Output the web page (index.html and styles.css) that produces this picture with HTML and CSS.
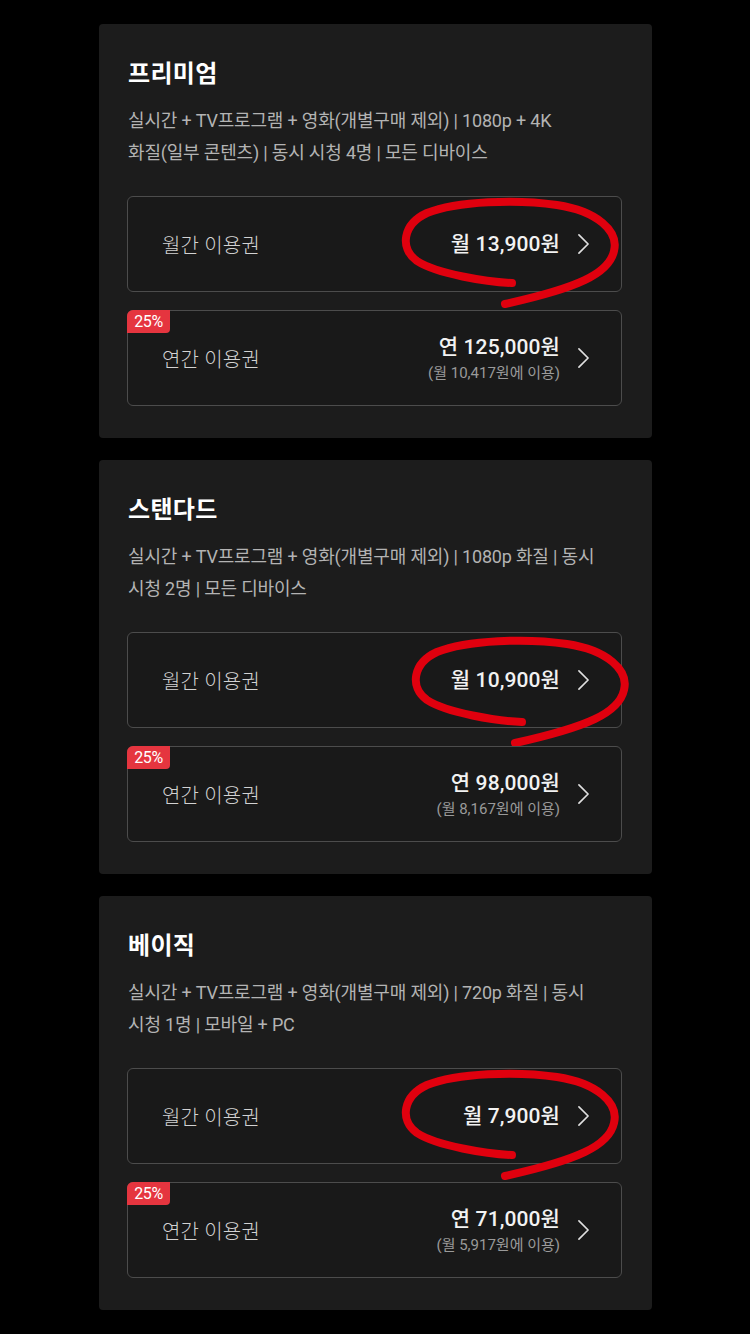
FILE: index.html
```html
<!DOCTYPE html>
<html lang="ko">
<head>
<meta charset="utf-8">
<title>이용권</title>
<link rel="stylesheet" href="styles.css">
</head>
<body>
<main class="plans">

  <section class="card">
    <h2 class="title">프리미엄</h2>
    <p class="desc">실시간 + TV프로그램 + 영화(개별구매 제외) | 1080p + 4K<br>화질(일부 콘텐츠) | 동시 시청 4명 | 모든 디바이스</p>
    <div class="option">
      <span class="label">월간 이용권</span>
      <div class="price-wrap"><span class="price">월 13,900원</span></div>
      <svg class="chev" viewBox="0 0 14 24"><path d="M2 2 L12 12 L2 22"/></svg>
      <svg class="mark" viewBox="0 0 500 120"><path d="M385 87 C360 86 310 78 290 65 C272 52 276 28 300 17 C330 5 390 3 430 9 C470 15 492 35 487 55 C482 78 450 92 378 108"/></svg>
    </div>
    <div class="option">
      <span class="badge">25%</span>
      <span class="label">연간 이용권</span>
      <div class="price-wrap"><span class="price">연 125,000원</span><span class="sub">(월 10,417원에 이용)</span></div>
      <svg class="chev" viewBox="0 0 14 24"><path d="M2 2 L12 12 L2 22"/></svg>
    </div>
  </section>

  <section class="card">
    <h2 class="title">스탠다드</h2>
    <p class="desc">실시간 + TV프로그램 + 영화(개별구매 제외) | 1080p 화질 | 동시<br>시청 2명 | 모든 디바이스</p>
    <div class="option">
      <span class="label">월간 이용권</span>
      <div class="price-wrap"><span class="price">월 10,900원</span></div>
      <svg class="chev" viewBox="0 0 14 24"><path d="M2 2 L12 12 L2 22"/></svg>
      <svg class="mark mark-shift" viewBox="0 0 500 120"><path d="M385 87 C360 86 310 78 290 65 C272 52 276 28 300 17 C330 5 390 3 430 9 C470 15 492 35 487 55 C482 78 450 92 378 108"/></svg>
    </div>
    <div class="option">
      <span class="badge">25%</span>
      <span class="label">연간 이용권</span>
      <div class="price-wrap"><span class="price">연 98,000원</span><span class="sub">(월 8,167원에 이용)</span></div>
      <svg class="chev" viewBox="0 0 14 24"><path d="M2 2 L12 12 L2 22"/></svg>
    </div>
  </section>

  <section class="card">
    <h2 class="title">베이직</h2>
    <p class="desc">실시간 + TV프로그램 + 영화(개별구매 제외) | 720p 화질 | 동시<br>시청 1명 | 모바일 + PC</p>
    <div class="option">
      <span class="label">월간 이용권</span>
      <div class="price-wrap"><span class="price">월 7,900원</span></div>
      <svg class="chev" viewBox="0 0 14 24"><path d="M2 2 L12 12 L2 22"/></svg>
      <svg class="mark" viewBox="0 0 500 120"><path d="M385 87 C360 86 310 78 290 65 C272 52 276 28 300 17 C330 5 390 3 430 9 C470 15 492 35 487 55 C482 78 450 92 378 108"/></svg>
    </div>
    <div class="option">
      <span class="badge">25%</span>
      <span class="label">연간 이용권</span>
      <div class="price-wrap"><span class="price">연 71,000원</span><span class="sub">(월 5,917원에 이용)</span></div>
      <svg class="chev" viewBox="0 0 14 24"><path d="M2 2 L12 12 L2 22"/></svg>
    </div>
  </section>

</main>
</body>
</html>
```

FILE: styles.css
```css
html, body {
  margin: 0;
  padding: 0;
  background: #000;
}

body {
  font-family: Roboto, "Noto Sans CJK KR", "Noto Sans", sans-serif;
  color: #fff;
  width: 750px;
  height: 1334px;
  overflow: hidden;
}

.plans {
  display: flex;
  flex-direction: column;
  gap: 22px;
  padding-top: 24px;
  padding-left: 99px;
}

.card {
  width: 553px;
  box-sizing: border-box;
  height: 414px;
  background: #1c1c1c;
  border-radius: 4px;
  padding: 34px 30px 32px 28px;
  display: flex;
  flex-direction: column;
}

.title {
  margin: 0;
  font-size: 24px;
  line-height: 32px;
  font-weight: 700;
  color: #fff;
  padding-left: 1px;
  letter-spacing: 0.3px;
}

.desc {
  margin: 15px 0 27px;
  font-size: 18px;
  line-height: 32px;
  color: #b3b3b3;
  letter-spacing: -0.18px;
  padding-left: 1px;
  white-space: nowrap;
}

.option {
  position: relative;
  height: 96px;
  box-sizing: border-box;
  border: 1px solid #4c4c4c;
  border-radius: 6px;
  background: #191919;
  display: flex;
  align-items: center;
  padding: 0 31px 0 34px;
}

.option + .option {
  margin-top: 18px;
}

.label {
  flex: 1;
  font-size: 20px;
  color: #d2d2d2;
  letter-spacing: 0.2px;
  font-weight: 300;
}

.price-wrap {
  display: flex;
  flex-direction: column;
  align-items: flex-end;
  margin-right: 17px;
}

.price {
  font-size: 21px;
  line-height: 26px;
  font-weight: 500;
  color: #f2f2f2;
  letter-spacing: 0.1px;
}

.sub {
  font-size: 15px;
  line-height: 20px;
  margin-top: 3px;
  color: #9a9a9a;
  letter-spacing: 0;
}

.chev {
  width: 13px;
  height: 22px;
  fill: none;
  stroke: #e0e0e0;
  stroke-width: 1.8;
  stroke-linecap: round;
  stroke-linejoin: round;
}

.badge {
  position: absolute;
  left: -1px;
  top: -1px;
  width: 43px;
  height: 23px;
  background: #e5353f;
  color: #fff;
  font-size: 16px;
  line-height: 23px;
  text-align: center;
  border-radius: 6px 0 4px 0;
  letter-spacing: -0.4px;
}

.mark {
  position: absolute;
  left: -1px;
  top: -1px;
  width: 500px;
  height: 120px;
  overflow: visible;
  pointer-events: none;
  fill: none;
  stroke: #e0000e;
  stroke-width: 8;
  stroke-linecap: round;
  stroke-linejoin: round;
}

.mark-shift {
  left: 9px;
  top: 2px;
}
```
